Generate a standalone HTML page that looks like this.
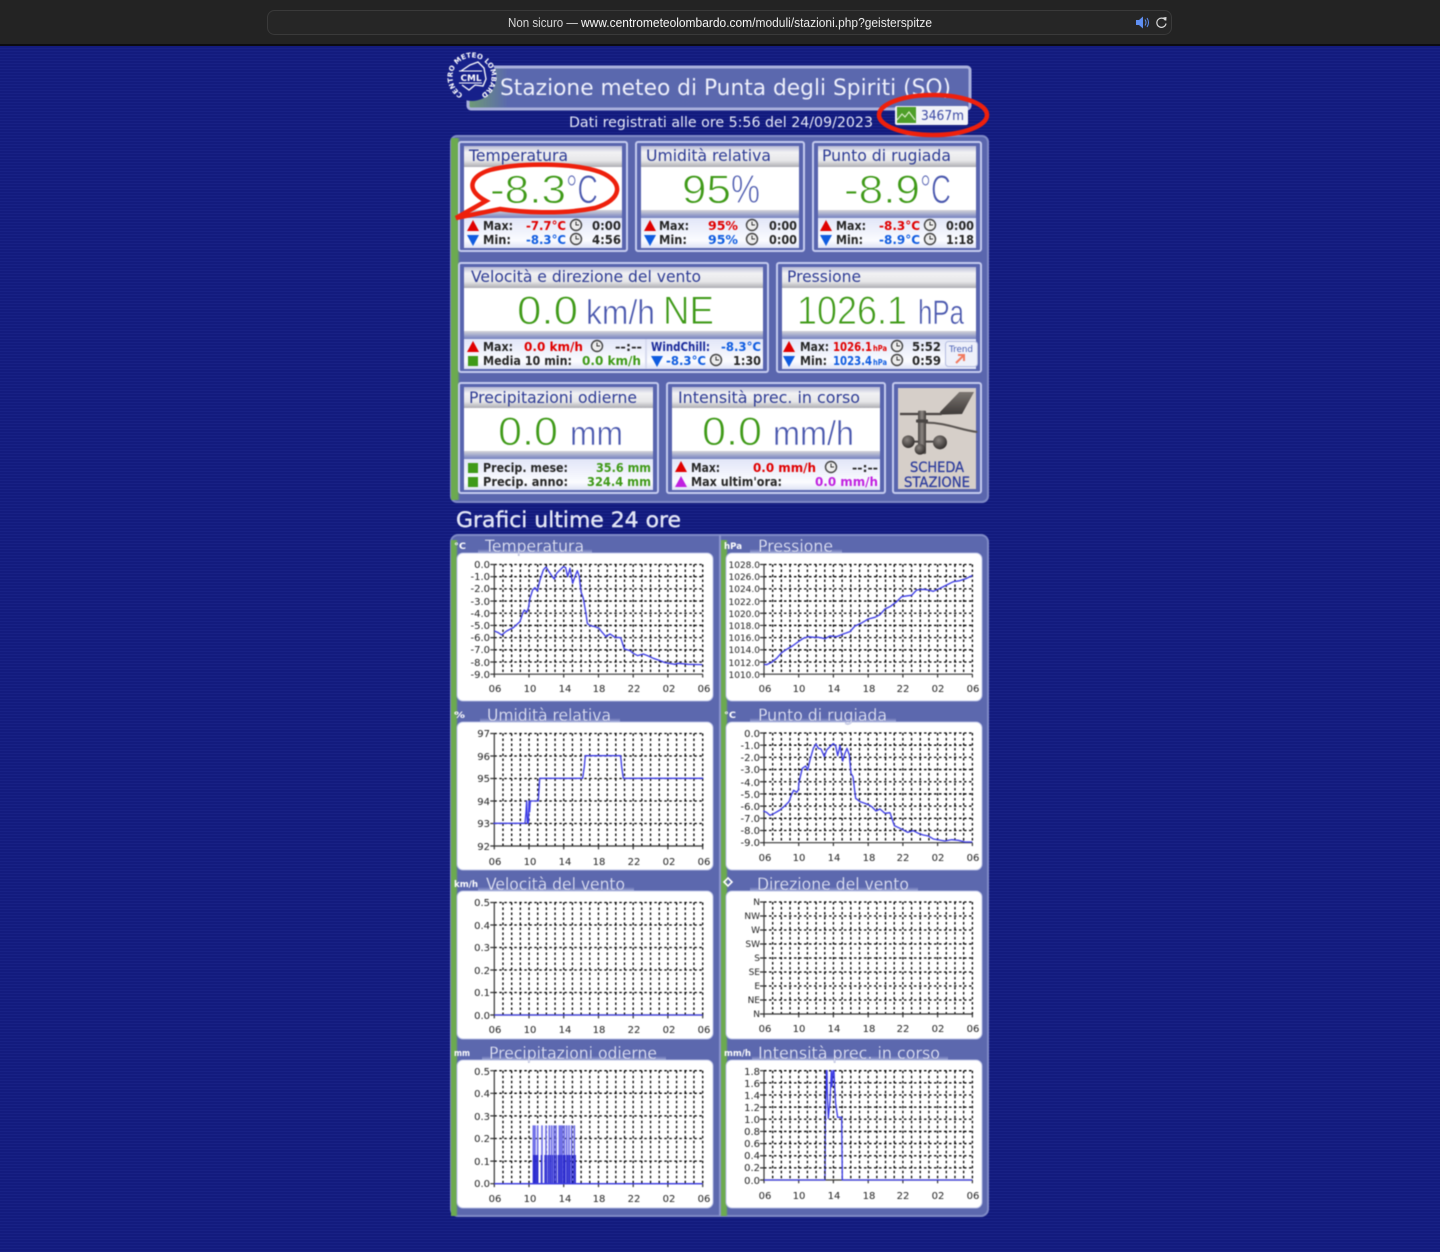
<!DOCTYPE html>
<html lang="it">
<head>
<meta charset="utf-8">
<title>Stazione meteo di Punta degli Spiriti (SO)</title>
<style>
html,body{margin:0;padding:0;background:#131b7e;width:1440px;height:1252px;overflow:hidden}
svg{display:block;position:absolute;left:0;top:0}
text{font-family:"DejaVu Sans","Liberation Sans",sans-serif}
.soft{filter:blur(.5px)}
.t{font-size:16px;fill:#2c3a94;transform:translateY(-1px)}
.v{font-family:"Liberation Sans",sans-serif;font-size:40px;fill:#3f9a18;stroke:#fff;stroke-width:.9}
.u{font-family:"Liberation Sans",sans-serif;font-size:34px;fill:#4a58ae;stroke:#fff;stroke-width:.6}
.w{font-family:"Liberation Sans",sans-serif;font-size:40px;fill:#4a58ae;stroke:#fff;stroke-width:.9}
.s{font-size:12px;font-weight:bold;fill:#262626;transform:translateY(-1px)}
.r{font-size:12px;font-weight:bold;fill:#e00000;transform:translateY(-1px)}
.b{font-size:12px;font-weight:bold;fill:#0f5ce0;transform:translateY(-1px)}
.g{font-size:12px;font-weight:bold;fill:#3f9a18;transform:translateY(-1px)}
.c{font-size:17px;fill:#e2e5f6;stroke:#3c4690;stroke-width:.15}
.n{font-size:9px;font-weight:bold;fill:#fff}
.y{font-size:10px;fill:#222;text-anchor:end}
.p{font-size:9px;fill:#222;text-anchor:end}
.x{font-size:10px;fill:#222;text-anchor:middle}
.l{fill:none;stroke:#3c3ce6;stroke-width:4;stroke-linejoin:round}
.d{fill:none;stroke:#000;stroke-width:1.3;stroke-dasharray:2.5 2.5;vector-effect:non-scaling-stroke}
.a{fill:none;stroke:#333;stroke-width:1.2;vector-effect:non-scaling-stroke}
</style>
</head>
<body>
<svg xmlns="http://www.w3.org/2000/svg" width="1440" height="1252" viewBox="0 0 1440 1252">
<defs>
<pattern id="scan" width="4" height="3" patternUnits="userSpaceOnUse"><rect width="4" height="3" fill="#131b7e"/><rect width="4" height="1" fill="#182185"/></pattern>
<linearGradient id="hdr" x1="0" y1="0" x2="0" y2="1"><stop offset="0" stop-color="#b9bcd6"/><stop offset=".3" stop-color="#f2f2f4"/><stop offset=".7" stop-color="#e6e6e8"/><stop offset="1" stop-color="#adadb2"/></linearGradient>
<linearGradient id="band" x1="0" y1="0" x2="0" y2="1"><stop offset="0" stop-color="#d4d4d8"/><stop offset="1" stop-color="#7480c0"/></linearGradient>
<linearGradient id="st" x1="0" y1="0" x2="0" y2="1"><stop offset="0" stop-color="#e2e6f8"/><stop offset=".75" stop-color="#fbfcff"/><stop offset="1" stop-color="#dfe3f5"/></linearGradient>
<linearGradient id="grn" x1="0" y1="0" x2="1" y2="0"><stop offset="0" stop-color="#6caa50"/><stop offset=".7" stop-color="#6caa50"/><stop offset="1" stop-color="#6caa50" stop-opacity="0"/></linearGradient>
<linearGradient id="ttl" x1="0" y1="0" x2="1" y2="0"><stop offset="0" stop-color="#6f9c74"/><stop offset=".08" stop-color="#5a68ae"/><stop offset="1" stop-color="#5c68ae"/></linearGradient>
<linearGradient id="tab" x1="0" y1="0" x2="0" y2="1"><stop offset="0" stop-color="#5c68ae"/><stop offset="1" stop-color="#b4bbe2"/></linearGradient>
<linearGradient id="vane" x1="0" y1="0" x2="0" y2="1"><stop offset="0" stop-color="#7c7672"/><stop offset="1" stop-color="#3e3a38"/></linearGradient>
<linearGradient id="mast" x1="0" y1="0" x2="1" y2="0"><stop offset="0" stop-color="#4a4644"/><stop offset=".5" stop-color="#8c8682"/><stop offset="1" stop-color="#3e3a38"/></linearGradient>
<radialGradient id="cup" cx=".4" cy=".35" r=".7"><stop offset="0" stop-color="#8a8480"/><stop offset="1" stop-color="#2e2a28"/></radialGradient>
<g id="clk"><circle cx="0" cy="0" r="5.5" fill="#eee" stroke="#444" stroke-width="1.4"/><path d="M0-3.500V0H3" fill="none" stroke="#333" stroke-width="1"/></g>
<path id="up" d="M-6 5L0-6L6 5Z" fill="#e00000"/>
<path id="dn" d="M-6-5L0 6L6-5Z" fill="#0f5ce0"/>
<path id="v" class="d" d="M8.68 0V100M17.36 0V100M26.04 0V100M34.72 0V100M43.4 0V100M52.08 0V100M60.76 0V100M69.44 0V100M78.12 0V100M86.8 0V100M95.48 0V100M104.16 0V100M112.84 0V100M121.52 0V100M130.2 0V100M138.88 0V100M147.56 0V100M156.24 0V100M164.92 0V100M173.6 0V100M182.28 0V100M190.96 0V100M199.64 0V100M208.4 0V100"/>
<path id="h9" class="d" d="M0 0H208.4M0 11.11H208.4M0 22.22H208.4M0 33.33H208.4M0 44.44H208.4M0 55.56H208.4M0 66.67H208.4M0 77.78H208.4M0 88.89H208.4"/>
<path id="h8" class="d" d="M0 0H208.4M0 12.5H208.4M0 25H208.4M0 37.5H208.4M0 50H208.4M0 62.5H208.4M0 75H208.4M0 87.5H208.4"/>
<path id="h5" class="d" d="M0 0H208.4M0 20H208.4M0 40H208.4M0 60H208.4M0 80H208.4"/>
<path id="ax" class="a" d="M0 0V103M-1 100H208.4M0 100V103M34.7 100V103M69.4 100V103M104.2 100V103M138.9 100V103M173.6 100V103M208.4 100V103"/>
<path id="tk9" class="a" d="M-4 0H0M-4 11.11H0M-4 22.22H0M-4 33.33H0M-4 44.44H0M-4 55.56H0M-4 66.67H0M-4 77.78H0M-4 88.89H0M-4 100H0"/>
<path id="tk8" class="a" d="M-4 0H0M-4 12.5H0M-4 25H0M-4 37.5H0M-4 50H0M-4 62.5H0M-4 75H0M-4 87.5H0M-4 100H0"/>
<path id="tk5" class="a" d="M-4 0H0M-4 20H0M-4 40H0M-4 60H0M-4 80H0M-4 100H0"/>
<path id="ring" d="M463 94.3A19.5 19.5 0 1 1 480 94.8"/>
</defs>

<rect width="1440" height="1252" fill="url(#scan)"/>

<!-- browser bar -->
<rect width="1440" height="45" fill="#232323"/>
<rect y="44" width="1440" height="2" fill="#0c0c12"/>
<rect x="267.5" y="10.5" width="904" height="24" rx="7" fill="#262626" stroke="#3a3a3a"/>
<text x="508" y="27" font-size="12.5" fill="#d8d8d8" textLength="70" lengthAdjust="spacingAndGlyphs" style="font-family:'Liberation Sans',sans-serif">Non sicuro —</text>
<text x="581" y="27" font-size="12.5" fill="#f8f8f8" textLength="351" lengthAdjust="spacingAndGlyphs" style="font-family:'Liberation Sans',sans-serif"><tspan>www.centrometeolombardo.com</tspan><tspan fill="#ececec">/moduli/stazioni.php?geisterspitze</tspan></text>
<path d="M1136 20h3l4-3.5v12l-4-3.5h-3z" fill="#5f8ff2"/>
<path d="M1145 19.5q2 3 0 6M1147 18q3 4.500 0 9" fill="none" stroke="#5f8ff2" stroke-width="1"/>
<path d="M1165.500 20.500a4.600 4.600 0 1 0 .5 3" fill="none" stroke="#d8d8d8" stroke-width="1.200"/>
<path d="M1163 17.500l3.500-.5-.2 3.800z" fill="#d8d8d8"/>

<g class="soft">
<!-- header -->
<rect x="468" y="67" width="502" height="42" rx="3" fill="url(#ttl)" stroke="#a9b0dc" stroke-width="3"/>
<circle cx="472" cy="77" r="24" fill="#16208a"/>
<text font-size="7" font-weight="bold" fill="#fff"><textPath href="#ring">CENTRO METEO LOMBARDO</textPath></text>
<path d="M461 71L470 65L478 62L484 68L486 79L483 86L475 85L469 90L462 85" fill="none" stroke="#fff" stroke-width="1.300"/>
<rect x="459" y="71" width="24" height="12" fill="#16208a"/>
<path d="M459 71H482M459 83H482" stroke="#fff" stroke-width="1"/>
<text x="460.500" y="81" font-size="9" font-weight="bold" fill="#fff" textLength="21" lengthAdjust="spacingAndGlyphs">CML</text>
<text x="500" y="95" font-size="22" fill="#eef0fb" textLength="451" lengthAdjust="spacingAndGlyphs">Stazione meteo di Punta degli Spiriti (SO)</text>
<text x="569" y="127" font-size="14.500" fill="#e6e9f8" textLength="304" lengthAdjust="spacingAndGlyphs">Dati registrati alle ore 5:56 del 24/09/2023</text>
<rect x="895" y="106" width="73" height="19" rx="2" fill="#f2f3f8"/>
<rect x="897" y="107" width="19" height="16" fill="#4e9f28"/>
<path d="M897 120l5-6 3 3 4-5 6 8" fill="none" stroke="#d9ecc6" stroke-width="1.200"/>
<text x="921" y="120" font-size="13" fill="#3a48a4" textLength="43" lengthAdjust="spacingAndGlyphs">3467m</text>

<!-- top frame -->
<rect x="451" y="136" width="537" height="366" rx="6" fill="#5a66ae" stroke="#7f8ac6" stroke-width="2"/>
<rect x="451" y="138" width="9" height="362" fill="url(#grn)"/>

<!-- cards row 1 -->
<rect x="459" y="142" width="168" height="109" rx="2" fill="#5864ae" stroke="#c5cbee" stroke-width="2"/>
<rect x="464" y="146" width="158" height="21" fill="url(#hdr)"/><rect x="464" y="167" width="158" height="43" fill="#fff"/><rect x="464" y="210" width="158" height="8" fill="url(#band)"/><rect x="464" y="218" width="158" height="30" fill="url(#st)"/>
<rect x="636" y="142" width="168" height="109" rx="2" fill="#5864ae" stroke="#c5cbee" stroke-width="2"/>
<rect x="641" y="146" width="158" height="21" fill="url(#hdr)"/><rect x="641" y="167" width="158" height="43" fill="#fff"/><rect x="641" y="210" width="158" height="8" fill="url(#band)"/><rect x="641" y="218" width="158" height="30" fill="url(#st)"/>
<rect x="813" y="142" width="168" height="109" rx="2" fill="#5864ae" stroke="#c5cbee" stroke-width="2"/>
<rect x="818" y="146" width="158" height="21" fill="url(#hdr)"/><rect x="818" y="167" width="158" height="43" fill="#fff"/><rect x="818" y="210" width="158" height="8" fill="url(#band)"/><rect x="818" y="218" width="158" height="30" fill="url(#st)"/>

<text class="t" x="469" y="162" textLength="99" lengthAdjust="spacingAndGlyphs">Temperatura</text>
<text class="v" x="490" y="203" textLength="76" lengthAdjust="spacingAndGlyphs">-8.3</text><text class="w" x="566" y="203" textLength="32" lengthAdjust="spacingAndGlyphs">°C</text>
<use href="#up" x="473" y="226"/><text class="s" x="483" y="231" textLength="30" lengthAdjust="spacingAndGlyphs">Max:</text><text class="r" x="526" y="231" textLength="40" lengthAdjust="spacingAndGlyphs">-7.7°C</text><use href="#clk" x="576" y="225"/><text class="s" x="592" y="231" textLength="29" lengthAdjust="spacingAndGlyphs">0:00</text>
<use href="#dn" x="473" y="240"/><text class="s" x="483" y="245" textLength="28" lengthAdjust="spacingAndGlyphs">Min:</text><text class="b" x="526" y="245" textLength="40" lengthAdjust="spacingAndGlyphs">-8.3°C</text><use href="#clk" x="576" y="239"/><text class="s" x="592" y="245" textLength="29" lengthAdjust="spacingAndGlyphs">4:56</text>

<text class="t" x="646" y="162" textLength="125" lengthAdjust="spacingAndGlyphs">Umidità relativa</text>
<text class="v" x="682" y="203" textLength="49" lengthAdjust="spacingAndGlyphs">95</text><text class="w" x="731" y="203" textLength="29" lengthAdjust="spacingAndGlyphs">%</text>
<use href="#up" x="650" y="226"/><text class="s" x="659" y="231" textLength="30" lengthAdjust="spacingAndGlyphs">Max:</text><text class="r" x="708" y="231" textLength="30" lengthAdjust="spacingAndGlyphs">95%</text><use href="#clk" x="752" y="225"/><text class="s" x="769" y="231" textLength="28" lengthAdjust="spacingAndGlyphs">0:00</text>
<use href="#dn" x="650" y="240"/><text class="s" x="659" y="245" textLength="28" lengthAdjust="spacingAndGlyphs">Min:</text><text class="b" x="708" y="245" textLength="30" lengthAdjust="spacingAndGlyphs">95%</text><use href="#clk" x="752" y="239"/><text class="s" x="769" y="245" textLength="28" lengthAdjust="spacingAndGlyphs">0:00</text>

<text class="t" x="822" y="162" textLength="129" lengthAdjust="spacingAndGlyphs">Punto di rugiada</text>
<text class="v" x="844" y="203" textLength="76" lengthAdjust="spacingAndGlyphs">-8.9</text><text class="w" x="920" y="203" textLength="31" lengthAdjust="spacingAndGlyphs">°C</text>
<use href="#up" x="826" y="226"/><text class="s" x="836" y="231" textLength="30" lengthAdjust="spacingAndGlyphs">Max:</text><text class="r" x="879" y="231" textLength="41" lengthAdjust="spacingAndGlyphs">-8.3°C</text><use href="#clk" x="930" y="225"/><text class="s" x="946" y="231" textLength="28" lengthAdjust="spacingAndGlyphs">0:00</text>
<use href="#dn" x="826" y="240"/><text class="s" x="836" y="245" textLength="27" lengthAdjust="spacingAndGlyphs">Min:</text><text class="b" x="879" y="245" textLength="41" lengthAdjust="spacingAndGlyphs">-8.9°C</text><use href="#clk" x="930" y="239"/><text class="s" x="946" y="245" textLength="28" lengthAdjust="spacingAndGlyphs">1:18</text>

<!-- cards row 2 -->
<rect x="459" y="263" width="309" height="109" rx="2" fill="#5864ae" stroke="#c5cbee" stroke-width="2"/>
<rect x="464" y="267" width="299" height="21" fill="url(#hdr)"/><rect x="464" y="288" width="299" height="43" fill="#fff"/><rect x="464" y="331" width="299" height="8" fill="url(#band)"/><rect x="464" y="339" width="299" height="30" fill="url(#st)"/>
<rect x="645" y="339" width="2" height="30" fill="#d8dcf0"/>
<rect x="777" y="263" width="204" height="109" rx="2" fill="#5864ae" stroke="#c5cbee" stroke-width="2"/>
<rect x="782" y="267" width="194" height="21" fill="url(#hdr)"/><rect x="782" y="288" width="194" height="43" fill="#fff"/><rect x="782" y="331" width="194" height="8" fill="url(#band)"/><rect x="782" y="339" width="194" height="30" fill="url(#st)"/>

<text class="t" x="471" y="283" textLength="230" lengthAdjust="spacingAndGlyphs">Velocità e direzione del vento</text>
<text class="v" x="517" y="324" textLength="61" lengthAdjust="spacingAndGlyphs">0.0</text><text class="u" x="586" y="324" textLength="69" lengthAdjust="spacingAndGlyphs">km/h</text><text class="v" x="663" y="324" textLength="51" lengthAdjust="spacingAndGlyphs">NE</text>
<use href="#up" x="473" y="347"/><text class="s" x="483" y="352" textLength="30" lengthAdjust="spacingAndGlyphs">Max:</text><text class="r" x="524" y="352" textLength="59" lengthAdjust="spacingAndGlyphs">0.0 km/h</text><use href="#clk" x="597" y="346"/><text class="s" x="615" y="352" textLength="27" lengthAdjust="spacingAndGlyphs">--:--</text>
<rect x="468" y="356" width="10" height="10" fill="#3f9a18"/><text class="s" x="483" y="366" textLength="89" lengthAdjust="spacingAndGlyphs">Media 10 min:</text><text class="g" x="582" y="366" textLength="59" lengthAdjust="spacingAndGlyphs">0.0 km/h</text>
<text class="s" x="651" y="352" textLength="59" lengthAdjust="spacingAndGlyphs" style="fill:#1a2a9a">WindChill:</text><text class="b" x="721" y="352" textLength="40" lengthAdjust="spacingAndGlyphs">-8.3°C</text>
<use href="#dn" x="657" y="361"/><text class="b" x="666" y="366" textLength="40" lengthAdjust="spacingAndGlyphs">-8.3°C</text><use href="#clk" x="716" y="360"/><text class="s" x="733" y="366" textLength="28" lengthAdjust="spacingAndGlyphs">1:30</text>

<text class="t" x="787" y="283" textLength="74" lengthAdjust="spacingAndGlyphs">Pressione</text>
<text class="v" x="797" y="324" textLength="110" lengthAdjust="spacingAndGlyphs">1026.1</text><text class="u" x="918" y="324" textLength="46" lengthAdjust="spacingAndGlyphs">hPa</text>
<use href="#up" x="789" y="347"/><text class="s" x="800" y="352" textLength="29" lengthAdjust="spacingAndGlyphs">Max:</text><text class="r" x="833" y="352" textLength="39" lengthAdjust="spacingAndGlyphs">1026.1</text><text class="r" x="873" y="352" textLength="14" lengthAdjust="spacingAndGlyphs" style="font-size:8px">hPa</text><use href="#clk" x="897" y="346"/><text class="s" x="912" y="352" textLength="29" lengthAdjust="spacingAndGlyphs">5:52</text>
<use href="#dn" x="789" y="361"/><text class="s" x="800" y="366" textLength="27" lengthAdjust="spacingAndGlyphs">Min:</text><text class="b" x="833" y="366" textLength="39" lengthAdjust="spacingAndGlyphs">1023.4</text><text class="b" x="873" y="366" textLength="14" lengthAdjust="spacingAndGlyphs" style="font-size:8px">hPa</text><use href="#clk" x="897" y="360"/><text class="s" x="912" y="366" textLength="29" lengthAdjust="spacingAndGlyphs">0:59</text>
<rect x="945.500" y="341.500" width="32" height="25" rx="3" fill="#eef0fa" stroke="#b4bce0"/>
<text x="949" y="352" font-size="9" fill="#4a60b4" textLength="24" lengthAdjust="spacingAndGlyphs">Trend</text>
<path d="M956 363l8-8M958 355h6v6" fill="none" stroke="#f07a60" stroke-width="2"/>

<!-- cards row 3 -->
<rect x="459" y="383" width="199" height="110" rx="2" fill="#5864ae" stroke="#c5cbee" stroke-width="2"/>
<rect x="464" y="387" width="189" height="21" fill="url(#hdr)"/><rect x="464" y="408" width="189" height="43" fill="#fff"/><rect x="464" y="451" width="189" height="8" fill="url(#band)"/><rect x="464" y="459" width="189" height="31" fill="url(#st)"/>
<rect x="667" y="383" width="218" height="110" rx="2" fill="#5864ae" stroke="#c5cbee" stroke-width="2"/>
<rect x="672" y="387" width="208" height="21" fill="url(#hdr)"/><rect x="672" y="408" width="208" height="43" fill="#fff"/><rect x="672" y="451" width="208" height="8" fill="url(#band)"/><rect x="672" y="459" width="208" height="31" fill="url(#st)"/>
<rect x="893" y="383" width="88" height="110" rx="2" fill="#5864ae" stroke="#c5cbee" stroke-width="2"/>
<rect x="898" y="388" width="78" height="101" fill="#d6cfc9"/>

<text class="t" x="469" y="404" textLength="168" lengthAdjust="spacingAndGlyphs">Precipitazioni odierne</text>
<text class="v" x="498" y="445" textLength="60" lengthAdjust="spacingAndGlyphs">0.0</text><text class="u" x="570" y="445" textLength="53" lengthAdjust="spacingAndGlyphs">mm</text>
<rect x="468" y="463" width="10" height="10" fill="#3f9a18"/><text class="s" x="483" y="473" textLength="85" lengthAdjust="spacingAndGlyphs">Precip. mese:</text><text class="g" x="596" y="473" textLength="55" lengthAdjust="spacingAndGlyphs">35.6 mm</text>
<rect x="468" y="477" width="10" height="10" fill="#3f9a18"/><text class="s" x="483" y="487" textLength="85" lengthAdjust="spacingAndGlyphs">Precip. anno:</text><text class="g" x="587" y="487" textLength="64" lengthAdjust="spacingAndGlyphs">324.4 mm</text>

<text class="t" x="678" y="404" textLength="182" lengthAdjust="spacingAndGlyphs">Intensità prec. in corso</text>
<text class="v" x="702" y="445" textLength="60" lengthAdjust="spacingAndGlyphs">0.0</text><text class="u" x="773" y="445" textLength="81" lengthAdjust="spacingAndGlyphs">mm/h</text>
<use href="#up" x="681" y="467"/><text class="s" x="691" y="473" textLength="29" lengthAdjust="spacingAndGlyphs">Max:</text><text class="r" x="753" y="473" textLength="63" lengthAdjust="spacingAndGlyphs">0.0 mm/h</text><use href="#clk" x="831" y="467"/><text class="s" x="852" y="473" textLength="26" lengthAdjust="spacingAndGlyphs">--:--</text>
<path d="M675 487L681 476L687 487Z" fill="#c020e0"/><text class="s" x="691" y="487" textLength="91" lengthAdjust="spacingAndGlyphs">Max ultim'ora:</text><text class="r" x="815" y="487" textLength="63" lengthAdjust="spacingAndGlyphs" style="fill:#c020e0">0.0 mm/h</text>

<!-- anemometer -->
<g transform="translate(890 380) scale(.3333)">
<path d="M108 128C170 128 210 150 262 156" stroke="#5a5552" stroke-width="6" fill="none"/>
<path d="M150 96L208 36H252L216 102L150 104Z" fill="url(#vane)"/>
<path d="M30 102H155" stroke="#4a4644" stroke-width="7" fill="none"/>
<path d="M55 185H150" stroke="#4a4644" stroke-width="6" fill="none"/>
<rect x="84" y="92" width="24" height="130" rx="4" fill="url(#mast)"/>
<rect x="78" y="118" width="36" height="10" rx="3" fill="#4a4644"/>
<circle cx="55" cy="185" r="19" fill="url(#cup)"/><circle cx="150" cy="187" r="21" fill="url(#cup)"/><circle cx="90" cy="208" r="16" fill="url(#cup)"/>
</g>
<text x="910" y="472" font-size="14" fill="#2a3a9c" stroke="#2a3a9c" stroke-width=".25" textLength="54" lengthAdjust="spacingAndGlyphs">SCHEDA</text>
<text x="904" y="487" font-size="14" fill="#2a3a9c" stroke="#2a3a9c" stroke-width=".25" textLength="66" lengthAdjust="spacingAndGlyphs">STAZIONE</text>

<!-- grafici -->
<text x="456" y="527" font-size="21" fill="#e3e6f6" stroke="#e3e6f6" stroke-width=".4" textLength="225" lengthAdjust="spacingAndGlyphs">Grafici ultime 24 ore</text>
<rect x="451" y="535" width="537" height="681" rx="7" fill="#5c68ae" stroke="#7f8ac6" stroke-width="2"/>
<rect x="451" y="540" width="7" height="676" fill="url(#grn)"/>
<rect x="719" y="535" width="2" height="681" fill="#8a94cc"/>
<rect x="721" y="540" width="7" height="676" fill="url(#grn)"/>

<g fill="url(#tab)">
<rect x="478" y="549" width="114" height="5"/><rect x="750" y="549" width="92" height="5"/>
<rect x="480" y="718" width="140" height="5"/><rect x="750" y="718" width="146" height="5"/>
<rect x="478" y="887" width="156" height="5"/><rect x="750" y="887" width="168" height="5"/>
<rect x="482" y="1056" width="184" height="5"/><rect x="752" y="1056" width="196" height="5"/>
</g>
<g fill="#fff" stroke="#b8bfe4" stroke-width="1">
<rect x="457" y="553" width="256" height="148" rx="6"/><rect x="726" y="553" width="256" height="148" rx="6"/>
<rect x="457" y="722" width="256" height="148" rx="6"/><rect x="726" y="722" width="256" height="148" rx="6"/>
<rect x="457" y="891" width="256" height="148" rx="6"/><rect x="726" y="891" width="256" height="148" rx="6"/>
<rect x="457" y="1060" width="256" height="148" rx="6"/><rect x="726" y="1060" width="256" height="148" rx="6"/>
</g>

<text class="c" x="485" y="552" textLength="99" lengthAdjust="spacingAndGlyphs">Temperatura</text><text class="n" x="454" y="549" textLength="12" lengthAdjust="spacingAndGlyphs">°C</text>
<text class="c" x="758" y="552" textLength="75" lengthAdjust="spacingAndGlyphs">Pressione</text><text class="n" x="724" y="549" textLength="18" lengthAdjust="spacingAndGlyphs">hPa</text>
<text class="c" x="487" y="721" textLength="124" lengthAdjust="spacingAndGlyphs">Umidità relativa</text><text class="n" x="454" y="718" textLength="11" lengthAdjust="spacingAndGlyphs">%</text>
<text class="c" x="758" y="721" textLength="129" lengthAdjust="spacingAndGlyphs">Punto di rugiada</text><text class="n" x="724" y="718" textLength="12" lengthAdjust="spacingAndGlyphs">°C</text>
<text class="c" x="486" y="890" textLength="139" lengthAdjust="spacingAndGlyphs">Velocità del vento</text><text class="n" x="454" y="887" textLength="24" lengthAdjust="spacingAndGlyphs">km/h</text>
<text class="c" x="757" y="890" textLength="152" lengthAdjust="spacingAndGlyphs">Direzione del vento</text><path d="M728 878l4 4-4 4-4-4z" fill="none" stroke="#fff" stroke-width="1.600"/>
<text class="c" x="489" y="1059" textLength="168" lengthAdjust="spacingAndGlyphs">Precipitazioni odierne</text><text class="n" x="454" y="1056" textLength="16" lengthAdjust="spacingAndGlyphs">mm</text>
<text class="c" x="758" y="1059" textLength="182" lengthAdjust="spacingAndGlyphs">Intensità prec. in corso</text><text class="n" x="724" y="1056" textLength="27" lengthAdjust="spacingAndGlyphs">mm/h</text>

<!-- grids -->
<g transform="translate(494.3 564.5) scale(1 1.097)"><use href="#v"/><use href="#h9"/><use href="#tk9"/><use href="#ax"/></g>
<g transform="translate(764 564.5) scale(1 1.097)"><use href="#v"/><use href="#h9"/><use href="#tk9"/><use href="#ax"/></g>
<g transform="translate(494.3 733.5) scale(1 1.125)"><use href="#v"/><use href="#h5"/><use href="#tk5"/><use href="#ax"/></g>
<g transform="translate(764 733) scale(1 1.097)"><use href="#v"/><use href="#h9"/><use href="#tk9"/><use href="#ax"/></g>
<g transform="translate(494.3 902.500) scale(1 1.125)"><use href="#v"/><use href="#h5"/><use href="#tk5"/><use href="#ax"/></g>
<g transform="translate(764 902) scale(1 1.12)"><use href="#v"/><use href="#h8"/><use href="#tk8"/><use href="#ax"/></g>
<g transform="translate(494.3 1070.700) scale(1 1.13)"><use href="#v"/><use href="#h5"/><use href="#tk5"/><use href="#ax"/></g>
<g transform="translate(764 1070.700) scale(1 1.093)"><use href="#v"/><use href="#h9"/><use href="#tk9"/><use href="#ax"/></g>

<!-- y labels -->
<g class="yl"><text class="y" x="490" y="568">0.0</text><text class="y" x="490" y="580">-1.0</text><text class="y" x="490" y="592">-2.0</text><text class="y" x="490" y="605">-3.0</text><text class="y" x="490" y="617">-4.0</text><text class="y" x="490" y="629">-5.0</text><text class="y" x="490" y="641">-6.0</text><text class="y" x="490" y="653">-7.0</text><text class="y" x="490" y="666">-8.0</text><text class="y" x="490" y="678">-9.0</text></g>
<g><text class="p" x="760" y="568">1028.0</text><text class="p" x="760" y="580">1026.0</text><text class="p" x="760" y="592">1024.0</text><text class="p" x="760" y="605">1022.0</text><text class="p" x="760" y="617">1020.0</text><text class="p" x="760" y="629">1018.0</text><text class="p" x="760" y="641">1016.0</text><text class="p" x="760" y="653">1014.0</text><text class="p" x="760" y="666">1012.0</text><text class="p" x="760" y="678">1010.0</text></g>
<g><text class="y" x="490" y="737">97</text><text class="y" x="490" y="760">96</text><text class="y" x="490" y="782">95</text><text class="y" x="490" y="805">94</text><text class="y" x="490" y="827">93</text><text class="y" x="490" y="850">92</text></g>
<g><text class="y" x="760" y="737">0.0</text><text class="y" x="760" y="749">-1.0</text><text class="y" x="760" y="761">-2.0</text><text class="y" x="760" y="773">-3.0</text><text class="y" x="760" y="786">-4.0</text><text class="y" x="760" y="798">-5.0</text><text class="y" x="760" y="810">-6.0</text><text class="y" x="760" y="822">-7.0</text><text class="y" x="760" y="834">-8.0</text><text class="y" x="760" y="846">-9.0</text></g>
<g><text class="y" x="490" y="906">0.5</text><text class="y" x="490" y="929">0.4</text><text class="y" x="490" y="951">0.3</text><text class="y" x="490" y="974">0.2</text><text class="y" x="490" y="996">0.1</text><text class="y" x="490" y="1019">0.0</text></g>
<g><text class="p" x="760" y="905">N</text><text class="p" x="760" y="919">NW</text><text class="p" x="760" y="933">W</text><text class="p" x="760" y="947">SW</text><text class="p" x="760" y="961">S</text><text class="p" x="760" y="975">SE</text><text class="p" x="760" y="989">E</text><text class="p" x="760" y="1003">NE</text><text class="p" x="760" y="1017">N</text></g>
<g><text class="y" x="490" y="1075">0.5</text><text class="y" x="490" y="1097">0.4</text><text class="y" x="490" y="1120">0.3</text><text class="y" x="490" y="1142">0.2</text><text class="y" x="490" y="1165">0.1</text><text class="y" x="490" y="1187">0.0</text></g>
<g><text class="y" x="760" y="1075">1.8</text><text class="y" x="760" y="1087">1.6</text><text class="y" x="760" y="1099">1.4</text><text class="y" x="760" y="1111">1.2</text><text class="y" x="760" y="1123">1.0</text><text class="y" x="760" y="1135">0.8</text><text class="y" x="760" y="1147">0.6</text><text class="y" x="760" y="1159">0.4</text><text class="y" x="760" y="1171">0.2</text><text class="y" x="760" y="1184">0.0</text></g>

<!-- x labels -->
<g><text class="x" x="495" y="692">06</text><text class="x" x="530" y="692">10</text><text class="x" x="565" y="692">14</text><text class="x" x="599" y="692">18</text><text class="x" x="634" y="692">22</text><text class="x" x="669" y="692">02</text><text class="x" x="704" y="692">06</text></g>
<g><text class="x" x="765" y="692">06</text><text class="x" x="799" y="692">10</text><text class="x" x="834" y="692">14</text><text class="x" x="869" y="692">18</text><text class="x" x="903" y="692">22</text><text class="x" x="938" y="692">02</text><text class="x" x="973" y="692">06</text></g>
<g><text class="x" x="495" y="865">06</text><text class="x" x="530" y="865">10</text><text class="x" x="565" y="865">14</text><text class="x" x="599" y="865">18</text><text class="x" x="634" y="865">22</text><text class="x" x="669" y="865">02</text><text class="x" x="704" y="865">06</text></g>
<g><text class="x" x="765" y="861">06</text><text class="x" x="799" y="861">10</text><text class="x" x="834" y="861">14</text><text class="x" x="869" y="861">18</text><text class="x" x="903" y="861">22</text><text class="x" x="938" y="861">02</text><text class="x" x="973" y="861">06</text></g>
<g><text class="x" x="495" y="1033">06</text><text class="x" x="530" y="1033">10</text><text class="x" x="565" y="1033">14</text><text class="x" x="599" y="1033">18</text><text class="x" x="634" y="1033">22</text><text class="x" x="669" y="1033">02</text><text class="x" x="704" y="1033">06</text></g>
<g><text class="x" x="765" y="1032">06</text><text class="x" x="799" y="1032">10</text><text class="x" x="834" y="1032">14</text><text class="x" x="869" y="1032">18</text><text class="x" x="903" y="1032">22</text><text class="x" x="938" y="1032">02</text><text class="x" x="973" y="1032">06</text></g>
<g><text class="x" x="495" y="1202">06</text><text class="x" x="530" y="1202">10</text><text class="x" x="565" y="1202">14</text><text class="x" x="599" y="1202">18</text><text class="x" x="634" y="1202">22</text><text class="x" x="669" y="1202">02</text><text class="x" x="704" y="1202">06</text></g>
<g><text class="x" x="765" y="1199">06</text><text class="x" x="799" y="1199">10</text><text class="x" x="834" y="1199">14</text><text class="x" x="869" y="1199">18</text><text class="x" x="903" y="1199">22</text><text class="x" x="938" y="1199">02</text><text class="x" x="973" y="1199">06</text></g>

<!-- data lines -->
<polyline class="l" transform="translate(445 505) scale(.3333)" points="148,378 160,383 170,390 185,378 205,368 225,350 233,325 238,315 245,322 250,310 255,280 263,255 270,248 277,258 285,225 295,195 303,186 312,200 320,212 328,222 335,205 345,195 355,185 362,188 368,215 375,190 383,235 390,215 397,197 403,215 408,260 415,280 422,320 427,355 435,362 450,365 462,370 470,380 483,395 495,387 510,397 527,398 538,432 555,437 565,445 578,452 595,447 610,453 625,460 640,465 660,473 690,478 700,475 730,478 772,479"/>
<polyline class="l" transform="translate(715 530) scale(.3333)" points="147,403 155,404 170,397 185,385 200,368 215,358 232,348 250,335 265,325 280,320 295,322 310,322 330,326 345,318 365,320 385,312 405,305 420,288 440,279 460,267 480,262 495,254 510,237 525,230 545,215 560,200 580,197 590,196 605,180 625,178 640,180 655,184 675,175 695,165 715,155 735,152 755,145 772,137"/>
<polyline class="l" transform="translate(445 705) scale(.3333)" points="145,355 240,355 243,322 245,288 247,355 250,355 252,288 254,320 256,288 280,288 284,220 413,220 418,185 421,152 527,152 530,185 535,220 775,220"/>
<polyline class="l" transform="translate(715 705) scale(.3333)" points="145,318 155,322 165,331 178,325 195,315 210,302 222,290 230,268 236,256 245,262 250,255 252,232 262,190 272,183 278,195 285,165 295,130 303,117 310,130 318,132 328,155 335,135 345,125 355,116 362,122 368,152 375,122 383,168 390,145 396,130 403,150 408,205 414,215 422,280 435,290 450,295 462,300 470,305 483,318 495,312 510,325 525,323 538,362 555,370 565,375 578,382 595,377 610,385 625,390 640,393 655,402 690,408 710,404 730,406 750,411 772,411"/>
<path d="M494.300 1015H702.700" stroke="#3c3ce6" stroke-width="1.300" fill="none"/>
<g transform="translate(445 1040) scale(.3333)" fill="none">
<path d="M265 431V256M270 431V256M278 431V256M291 431V256M303 431V256M313 431V256M320 431V256M327 431V256M333 431V256M343 431V256M347 431V256M352 431V256M358 431V256M365 431V256M372 431V256M380 431V256M388 431V256" stroke="#7070e8" stroke-width="5"/>
<path d="M266 431V345M270 431V345M274 431V345M278 431V345M289 431V345M300 431V345M305 431V345M310 431V345M316 431V345M322 431V345M328 431V345M334 431V345M340 431V345M345 431V345M350 431V345M356 431V345M360 431V345M366 431V345M370 431V345M375 431V345M381 431V345M386 431V345M391 431V345" stroke="#2222cc" stroke-width="3.500"/>
<path d="M148 431H773" stroke="#3c3ce6" stroke-width="4"/>
</g>
<polyline class="l" transform="translate(715 1040) scale(.3333)" points="147,420 328,420 330,420 331,255 334,92 336,92 337,160 340,235 345,185 349,92 351,140 354,92 357,92 359,140 362,190 368,232 380,232 382,420 772,420"/>
<path d="M825 1071V1180" stroke="#111" stroke-width="1" stroke-dasharray="3 2" fill="none"/>

<!-- red annotations -->
<ellipse cx="933" cy="115" rx="54" ry="20" fill="none" stroke="#ee200c" stroke-width="4.500"/>
<path d="M486 201C465 190 470 176 490 170C520 162 575 163 600 172C625 182 622 200 595 208C560 215 520 212 500 209L456 218Z" fill="none" stroke="#ee200c" stroke-width="4.500" stroke-linejoin="miter"/>
</g>
</svg>
</body>
</html>
